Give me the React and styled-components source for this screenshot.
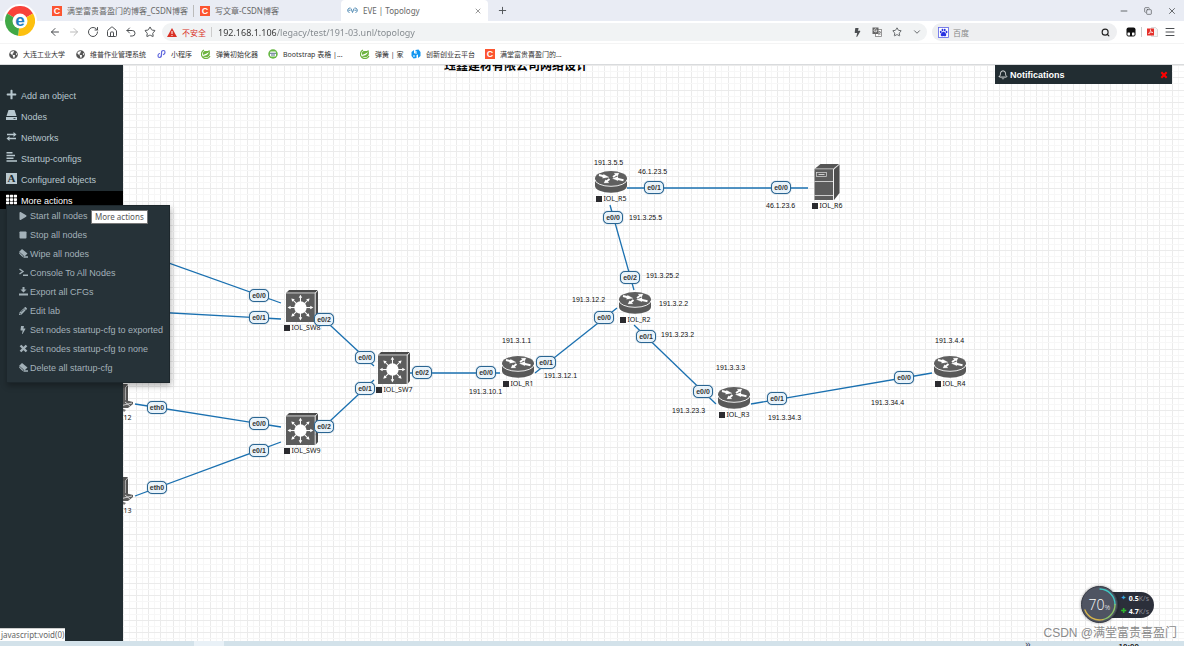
import React, { Component } from 'react';
import styled, { createGlobalStyle } from 'styled-components';
import { FaBolt, FaPlus, FaPlay, FaSquare, FaPencilAlt, FaTh, FaGlobeAmericas } from 'react-icons/fa';
import { ArrowLeft, ArrowRight, RotateCw, Home, Undo2, Star, ChevronDown, Search, Menu, Bell, X, Plus, Minus, Copy } from 'lucide-react';

const GlobalStyle = createGlobalStyle`
    * {
        box-sizing: border-box;
    }
    body {
        margin: 0;
        background: #fff;
        font-family: "Liberation Sans", "Noto Sans CJK SC", sans-serif;
    }
    button, input {
        margin: 0;
        padding: 0;
        border: 0;
        background: none;
        font: inherit;
        color: inherit;
    }
    a {
        color: inherit;
        text-decoration: none;
    }
    ul {
        margin: 0;
        padding: 0;
        list-style: none;
    }
    svg {
        display: block;
        flex: none;
    }
`

/* ---------- icons ---------- */

const BrowserLogo = () => (
    <svg width="30" height="30" viewBox="0 0 30 30">
        <path d="M15 15 L2 7.500 A15 15 0 0 1 28 7.500 Z" fill="#f8423a" />
        <path d="M15 15 L28 7.500 A15 15 0 0 1 13 29.800 Z" fill="#fdc00f" />
        <path d="M15 15 L13 29.800 A15 15 0 0 1 2 7.500 Z" fill="#41a846" />
        <circle cx="15" cy="15" r="7.500" fill="#fff" />
        <text x="15" y="19.500" textAnchor="middle" fontFamily="Liberation Sans" fontWeight="bold" fontSize="17" fill="#1f7fc0">e</text>
    </svg>
)

const EveLogo = () => (
    <svg width="11" height="7" viewBox="0 0 22 14" fill="none" stroke="#4a86b0" strokeWidth="1.900">
        <path d="M7 2 C0 1 0 11 5 11 M3 6.500 h4 M8 3 L11 11 L14 3 M15 2 C22 1 22 11 17 11 M15 6.500 h4" />
    </svg>
)

const SpringIcon = () => (
    <svg width="10" height="10" viewBox="0 0 20 20">
        <path d="M17 2 C19 9 18 14 13 16 C9 17 5 16 3 14 C8 14 14 12 16 6 C12 10 8 9 5 12 C2 8 5 4 9 4 C13 4 15 4 17 2z" fill="#6db33f" />
        <path d="M6 2 A9 9 0 1 0 18 14" fill="none" stroke="#6db33f" strokeWidth="2.500" />
    </svg>
)

const TableSiteIcon = () => (
    <svg width="10" height="10" viewBox="0 0 20 20">
        <circle cx="10" cy="10" r="9.500" fill="#67b845" />
        <rect x="4" y="5" width="12" height="10" rx="2" fill="#fff" />
        <path d="M4 8.500 h12 M6 12 h8" stroke="#526f85" strokeWidth="2" />
    </svg>
)

const MiniAppIcon = () => (
    <svg width="9" height="10" viewBox="0 0 18 20" fill="none" stroke="#5f66dd" strokeWidth="2.400" strokeLinecap="round">
        <path d="M5 9 C1 10 1 17 5 17 C9 17 9 14 9 10 C9 5 9 3 13 3 C17 3 17 9 13 11" />
    </svg>
)

const PlatformIcon = () => (
    <svg width="10" height="10" viewBox="0 0 20 20" fill="#1296f0">
        <path d="M1 6 L6 2 V9 L9 8 V2 L15 1 L19 6 V14 L14 18 V11 L11 12 V18 L5 19 L1 14z" />
        <path d="M9 4 h2 v6 h-2z M4 13 h4 v2 h-4z" fill="#fff" />
    </svg>
)

const WarningIcon = () => (
    <svg width="10" height="9" viewBox="0 0 20 18">
        <path d="M10 0 L20 18 H0z" fill="#d93025" />
        <path d="M10 6 v6 M10 14 v2" stroke="#fff" strokeWidth="2" />
    </svg>
)

const TranslateIcon = () => (
    <svg width="10" height="10" viewBox="0 0 20 20">
        <rect x="7" y="5" width="12" height="14" fill="#fff" stroke="#777" strokeWidth="1.500" />
        <rect x="1" y="1" width="12" height="13" fill="#666" />
        <path d="M10 7 A3 3 0 1 1 9 4.500 M7 7.500 h3" fill="none" stroke="#fff" strokeWidth="1.400" />
        <path d="M12 10 h6 M15 8 v2 M17 10 C16 14 14 15 12 16 M13 12 L17 16" fill="none" stroke="#555" strokeWidth="1.200" />
    </svg>
)

const PawIcon = () => (
    <svg width="11" height="11" viewBox="0 0 22 22" fill="#2932e1">
        <rect x="1" y="1" width="20" height="20" fill="#fff" stroke="#5a62e6" strokeWidth="1.600" />
        <ellipse cx="5.500" cy="10" rx="1.800" ry="2.500" />
        <ellipse cx="9" cy="6" rx="1.800" ry="2.600" />
        <ellipse cx="13.500" cy="6" rx="1.800" ry="2.600" />
        <ellipse cx="17" cy="10" rx="1.800" ry="2.500" />
        <path d="M11 9.500 C14 9.500 18 15 16 17.500 C14 19.500 13 18 11 18 C9 18 8 19.500 6 17.500 C4 15 8 9.500 11 9.500z" />
    </svg>
)

const MonkeyIcon = () => (
    <svg width="10" height="10" viewBox="0 0 20 20">
        <rect x="1" y="1" width="18" height="18" rx="4" fill="#111" />
        <rect x="3" y="11" width="5" height="6" rx="1" fill="#fff" />
        <rect x="12" y="11" width="5" height="6" rx="1" fill="#fff" />
    </svg>
)

const PdfIcon = () => (
    <svg width="11" height="10" viewBox="0 0 22 20">
        <path d="M9 1 h8 l4 4 v14 h-12z" fill="#f4f4f4" stroke="#bbb" />
        <rect x="0" y="3" width="14" height="14" fill="#e5312b" />
        <path d="M3 14 C6 11 7.500 8 7 5 C6.500 9 9 11 12 11 C8 10.500 5 11 3 14z" fill="none" stroke="#fff" strokeWidth="1.200" />
    </svg>
)

const CrossIcon = ({ size, color }) => (
    <svg width={size} height={size} viewBox="0 0 18 18" fill="none" stroke={color || 'currentColor'} strokeWidth="4.800">
        <path d="M3 3 L15 15 M15 3 L3 15" />
    </svg>
)

const DriveIcon = () => (
    <svg width="11" height="10" viewBox="0 0 22 20" fill="currentColor">
        <path d="M5 0 h12 l4 12 H1z M0 14 h22 v6 h-22z" />
        <path d="M15 17 h4" stroke="#222d32" strokeWidth="1.600" />
    </svg>
)

const TransferIcon = () => (
    <svg width="11" height="9" viewBox="0 0 22 18" fill="currentColor">
        <path d="M2 3.500 h13 V0 l6 5 -6 5 V6.500 H2z M20 11.500 H7 V8 l-6 5 6 5 v-3.500 h13z" />
    </svg>
)

const AlignIcon = () => (
    <svg width="11" height="10" viewBox="0 0 22 20" fill="currentColor">
        <path d="M1 0 h12 v3 h-12z M1 5.500 h17 v3 h-17z M1 11 h14 v3 h-14z M1 16.500 h21 v3 h-21z" />
    </svg>
)

const EraseIcon = () => (
    <svg width="9" height="9" viewBox="0 0 18 18" fill="currentColor">
        <path d="M0 6 L6 0 L17 9 L11 15z" />
        <path d="M1 8 L8 15 M9 16 h9" stroke="currentColor" strokeWidth="2.600" fill="none" />
        <path d="M2 7.500 L9 13.500" stroke="#263238" strokeWidth="1" />
    </svg>
)

const ConsoleIcon = () => (
    <svg width="9" height="9" viewBox="0 0 18 18" fill="none" stroke="currentColor" strokeWidth="2.800">
        <path d="M1 2 L8 7 L1 12 M8 14.500 h10" />
    </svg>
)

const ExportIcon = () => (
    <svg width="9" height="9" viewBox="0 0 18 18" fill="currentColor">
        <path d="M7 0 h4 v5 h4 L9 11 L3 5 h4z M0 13 h18 v4 H0z" />
    </svg>
)

/* ---------- device drawings ---------- */

const Router = () => (
    <svg width="32" height="22" viewBox="0 0 32 22">
        <path d="M0 7.500 V15 A16 6.800 0 0 0 32 15 V7.500z" fill="#585858" />
        <ellipse cx="16" cy="7.300" rx="16" ry="7.200" fill="#5f5f5f" />
        <path d="M0 8.500 A16 6.800 0 0 0 32 8.500" fill="none" stroke="#fff" strokeWidth="0.900" />
        <g stroke="#fff" strokeWidth="1.900" fill="#fff">
            <path d="M4 4 L10 5.500 M28.500 9.300 L22 7.800 M18 6 L21.500 3.500 M14.500 8 L11.500 10.500" />
            <path d="M8.500 3.200 L14 6.300 L7.500 7.200z M23 5.500 L17.500 7.600 L23 9.800z M19 2.200 L24 1.900 L22.500 5.200z M14 11.800 L9 12 L10.500 8.800z" strokeWidth="0.200" />
        </g>
    </svg>
)

const Switch = () => (
    <svg width="32" height="32" viewBox="0 0 31 31">
        <path d="M0 3 L3 0 H31 L28 3z" fill="#4a4a4a" />
        <path d="M28.500 3.500 L31 0.500 V28 L28.500 31z" fill="#4a4a4a" />
        <rect x="0" y="3" width="28" height="28" fill="#5c5c5c" />
        <path d="M0 2.800 H28.300 V31 M28.300 2.800 L31 0" fill="none" stroke="#ddd" strokeWidth="0.800" />
        <circle cx="14" cy="17" r="6" fill="#fff" />
        {[0, 45, 90, 135, 180, 225, 270, 315].map(angle => (
            <g key={angle} transform={`rotate(${angle} 14 17)`}>
                <path d="M14 12 V7" stroke="#fff" strokeWidth="1" />
                <path d="M14 4.500 L15.700 7.500 H12.300z" fill="#fff" />
            </g>
        ))}
    </svg>
)

const Server = () => (
    <svg width="26" height="36" viewBox="0 0 25 36">
        <path d="M0 5 L6 0 H25 L19 5z" fill="#555" />
        <path d="M19.500 5.500 L25 0.500 V29 L19.500 36z" fill="#4e4e4e" />
        <rect x="0" y="5" width="18.500" height="31" fill="#5c5c5c" />
        <path d="M0 4.800 H19 V36 M19 4.800 L25 0" fill="none" stroke="#e8e8e8" strokeWidth="0.700" />
        <path d="M0 17.500 H18.500 M0 31.500 H18.500" stroke="#e8e8e8" strokeWidth="0.800" />
        <rect x="2" y="8.500" width="10" height="4" fill="none" stroke="#ddd" strokeWidth="0.700" />
        <path d="M4 10.500 h6" stroke="#ddd" strokeWidth="0.900" />
    </svg>
)

const Computer = () => (
    <svg width="32" height="28" viewBox="0 0 32 28">
        <path d="M1 4 L4 0 H27 L24 4z M24.500 4 L27 1 V19 L24.500 21z" fill="#505050" />
        <rect x="1" y="4" width="23" height="16" fill="#5c5c5c" />
        <path d="M18 21 L24 16 L32 18 V20 L27 24 L18 24z" fill="#5c5c5c" />
        <path d="M21 21.500 L31 19 M24 18 L29 22" stroke="#eee" strokeWidth="0.800" />
        <path d="M20 24 L25 26 L23 28z" fill="#777" />
    </svg>
)

const drawings = { router: Router, switch: Switch, server: Server, pc: Computer }

/* ---------- data ---------- */

const bookmarks = [
    { text: '大连工业大学', icon: <FaGlobeAmericas size={9} color="#555" />, width: 67 },
    { text: '维普作业管理系统', icon: <FaGlobeAmericas size={9} color="#555" />, width: 81 },
    { text: '小程序', icon: <MiniAppIcon />, width: 44 },
    { text: '弹簧初始化器', icon: <SpringIcon />, width: 67 },
    { text: 'Bootstrap 表格 |...', icon: <TableSiteIcon />, width: 92 },
    { text: '弹簧 | 家', icon: <SpringIcon />, width: 51 },
    { text: '创新创业云平台', icon: <PlatformIcon />, width: 74 },
    { text: '满堂富贵喜盈门的...', icon: 'C', width: 90 },
]

const menuItems = [
    { text: 'Add an object', icon: <FaPlus size={11} /> },
    { text: 'Nodes', icon: <DriveIcon /> },
    { text: 'Networks', icon: <TransferIcon /> },
    { text: 'Startup-configs', icon: <AlignIcon /> },
    { text: 'Configured objects', icon: 'A' },
]

const actions = [
    { text: 'Start all nodes', icon: <FaPlay size={8} /> },
    { text: 'Stop all nodes', icon: <FaSquare size={8} /> },
    { text: 'Wipe all nodes', icon: <EraseIcon /> },
    { text: 'Console To All Nodes', icon: <ConsoleIcon /> },
    { text: 'Export all CFGs', icon: <ExportIcon /> },
    { text: 'Edit lab', icon: <FaPencilAlt size={8} /> },
    { text: 'Set nodes startup-cfg to exported', icon: <FaBolt size={8} /> },
    { text: 'Set nodes startup-cfg to none', icon: <CrossIcon size={9} /> },
    { text: 'Delete all startup-cfg', icon: <EraseIcon /> },
]

// x is the middle of the node, y its top
const nodes = [
    { name: 'VPC12', type: 'pc', x: 117, y: 319 },
    { name: 'VPC13', type: 'pc', x: 117, y: 412 },
    { name: 'IOL_SW8', type: 'switch', x: 302, y: 225 },
    { name: 'IOL_SW9', type: 'switch', x: 302, y: 348 },
    { name: 'IOL_SW7', type: 'switch', x: 394, y: 287 },
    { name: 'IOL_R1', type: 'router', x: 518, y: 291 },
    { name: 'IOL_R5', type: 'router', x: 611, y: 106 },
    { name: 'IOL_R2', type: 'router', x: 635, y: 227 },
    { name: 'IOL_R3', type: 'router', x: 734, y: 322 },
    { name: 'IOL_R4', type: 'router', x: 950, y: 291 },
    { name: 'IOL_R6', type: 'server', x: 827, y: 99 },
]

const links = [
    [135, 186, 281, 238],
    [135, 246, 281, 254],
    [316, 247, 374, 301],
    [315, 370, 374, 315],
    [135, 339, 281, 362],
    [135, 431, 281, 377],
    [408, 308, 500, 308],
    [535, 308, 617, 243],
    [627, 123, 808, 123],
    [610, 140, 634, 225],
    [634, 260, 716, 339],
    [751, 339, 932, 308],
]

// x and y are the middle of the badge
const ports = [
    { text: 'e0/0', x: 259, y: 230 },
    { text: 'e0/1', x: 259, y: 252 },
    { text: 'e0/2', x: 324, y: 254 },
    { text: 'e0/0', x: 365, y: 292 },
    { text: 'e0/1', x: 365, y: 323 },
    { text: 'e0/2', x: 324, y: 361 },
    { text: 'e0/0', x: 259, y: 358 },
    { text: 'e0/1', x: 259, y: 385 },
    { text: 'eth0', x: 157, y: 342 },
    { text: 'eth0', x: 157, y: 422 },
    { text: 'e0/2', x: 422, y: 307 },
    { text: 'e0/0', x: 486, y: 307 },
    { text: 'e0/1', x: 546, y: 297 },
    { text: 'e0/1', x: 654, y: 122 },
    { text: 'e0/0', x: 781, y: 122 },
    { text: 'e0/0', x: 613, y: 152 },
    { text: 'e0/2', x: 630, y: 212 },
    { text: 'e0/0', x: 604, y: 252 },
    { text: 'e0/1', x: 646, y: 271 },
    { text: 'e0/0', x: 703, y: 326 },
    { text: 'e0/1', x: 777, y: 333 },
    { text: 'e0/0', x: 904, y: 312 },
]

const addresses = [
    { text: '191.3.5.5', x: 594, y: 98 },
    { text: '46.1.23.5', x: 638, y: 107 },
    { text: '46.1.23.6', x: 766, y: 141 },
    { text: '191.3.25.5', x: 629, y: 153 },
    { text: '191.3.25.2', x: 646, y: 211 },
    { text: '191.3.12.2', x: 572, y: 235 },
    { text: '191.3.2.2', x: 659, y: 239 },
    { text: '191.3.23.2', x: 661, y: 270 },
    { text: '191.3.1.1', x: 502, y: 276 },
    { text: '191.3.12.1', x: 544, y: 311 },
    { text: '191.3.10.1', x: 469, y: 327 },
    { text: '191.3.3.3', x: 716, y: 303 },
    { text: '191.3.23.3', x: 672, y: 346 },
    { text: '191.3.34.3', x: 768, y: 353 },
    { text: '191.3.4.4', x: 935, y: 276 },
    { text: '191.3.34.4', x: 871, y: 338 },
]

/* ---------- page ---------- */

class Browser extends Component {
    render() {
        return (
            <Header>
                <LogoCircle><BrowserLogo /></LogoCircle>
                <TabBar>
                    <Tab $width={148}>
                        <Letter>C</Letter>
                        <TabText>满堂富贵喜盈门的博客_CSDN博客-专业</TabText>
                    </Tab>
                    <Tab $width={147}>
                        <Letter>C</Letter>
                        <TabText>写文章-CSDN博客</TabText>
                    </Tab>
                    <Tab $width={147} $active>
                        <EveLogo />
                        <TabText>EVE | Topology</TabText>
                        <X size={8} />
                    </Tab>
                    <NewTab aria-label="New tab"><Plus size={11} /></NewTab>
                    <WindowButtons>
                        <IconButton aria-label="Minimize"><Minus size={10} /></IconButton>
                        <IconButton aria-label="Restore"><Copy size={8} /></IconButton>
                        <IconButton aria-label="Close"><X size={10} /></IconButton>
                    </WindowButtons>
                </TabBar>
                <Toolbar>
                    <NavButtons>
                        <IconButton aria-label="Back"><ArrowLeft size={12} /></IconButton>
                        <IconButton aria-label="Forward" $muted><ArrowRight size={12} /></IconButton>
                        <IconButton aria-label="Reload"><RotateCw size={12} /></IconButton>
                        <IconButton aria-label="Home"><Home size={12} /></IconButton>
                        <IconButton aria-label="Undo"><Undo2 size={12} /></IconButton>
                        <IconButton aria-label="Favourite"><Star size={12} /></IconButton>
                    </NavButtons>
                    <AddressBar>
                        <WarningIcon />
                        <Unsafe>不安全</Unsafe>
                        <Divider />
                        <AddressInput aria-label="Address" defaultValue="192.168.1.106/legacy/test/191-03.unl/topology" />
                        <AddressTools>
                            <IconButton aria-label="Speed"><FaBolt size={9} /></IconButton>
                            <IconButton aria-label="Translate"><TranslateIcon /></IconButton>
                            <IconButton aria-label="Bookmark"><Star size={10} /></IconButton>
                            <IconButton aria-label="More"><ChevronDown size={10} /></IconButton>
                        </AddressTools>
                    </AddressBar>
                    <SearchBar>
                        <PawIcon />
                        <SearchInput aria-label="Search" placeholder="百度" />
                        <IconButton aria-label="Search"><Search size={9} color="#222" strokeWidth={3} /></IconButton>
                    </SearchBar>
                    <Extensions>
                        <IconButton aria-label="Scripts"><MonkeyIcon /></IconButton>
                        <Divider />
                        <IconButton aria-label="PDF"><PdfIcon /></IconButton>
                        <IconButton aria-label="Menu"><Menu size={12} /></IconButton>
                    </Extensions>
                </Toolbar>
                <Bookmarks>
                    {bookmarks.map(item => (
                        <Bookmark key={item.text} href="#" $width={item.width}>
                            {item.icon === 'C' ? <Letter>C</Letter> : item.icon}
                            {item.text}
                        </Bookmark>
                    ))}
                </Bookmarks>
            </Header>
        );
    }
}

class Sidebar extends Component {
    render() {
        return (
            <Side>
                <MenuList>
                    {menuItems.map(item => (
                        <li key={item.text}>
                            <MenuLink href="#">
                                <MenuIcon>{item.icon === 'A' ? <FontBox>A</FontBox> : item.icon}</MenuIcon>
                                {item.text}
                            </MenuLink>
                        </li>
                    ))}
                    <OpenItem>
                        <MenuLink href="#" $active>
                            <MenuIcon><FaTh size={11} /></MenuIcon>
                            More actions
                        </MenuLink>
                        <SubMenu>
                            {actions.map(item => (
                                <li key={item.text}>
                                    <SubLink href="#">
                                        <SubIcon>{item.icon}</SubIcon>
                                        {item.text}
                                    </SubLink>
                                </li>
                            ))}
                        </SubMenu>
                        <Tooltip role="tooltip">More actions</Tooltip>
                    </OpenItem>
                </MenuList>
                <StatusBubble>javascript:void(0)</StatusBubble>
            </Side>
        );
    }
}

class Topology extends Component {
    render() {
        return (
            <Canvas>
                <Plane>
                    <Title>珏鑫建材有限公司网络设计</Title>
                    <Wires>
                        {links.map((l, i) => (
                            <line key={i} x1={l[0]} y1={l[1]} x2={l[2]} y2={l[3]} />
                        ))}
                    </Wires>
                    {nodes.map(node => {
                        const Drawing = drawings[node.type]
                        return (
                            <Node key={node.name} $x={node.x} $y={node.y}>
                                <Drawing />
                                <NodeName><StateMark />{node.name}</NodeName>
                            </Node>
                        )
                    })}
                    {ports.map((port, i) => <Port key={i} $x={port.x} $y={port.y}>{port.text}</Port>)}
                    {addresses.map(a => <Address key={a.text} $x={a.x} $y={a.y}>{a.text}</Address>)}
                </Plane>
                <Notifications>
                    <Bell size={10} />
                    <NotificationsTitle>Notifications</NotificationsTitle>
                    <IconButton aria-label="Close notifications"><CrossIcon size={8} color="#f00" /></IconButton>
                </Notifications>
                <Monitor>
                    <Speeds>
                        <Speed><Arrow $color="#39a9e0">✦</Arrow><b>0.5</b>K/s</Speed>
                        <Speed><Arrow $color="#2eb82e">✚</Arrow><b>4.7</b>K/s</Speed>
                    </Speeds>
                    <Gauge>
                        <Ring width="37" height="37" viewBox="0 0 37 37" fill="none" strokeWidth="1.400" strokeLinecap="round">
                            <path d="M19 3 A15.500 15.500 0 0 1 34 18.500" stroke="#3fc8c4" />
                            <path d="M34 18.500 A15.500 15.500 0 0 1 22 33.600" stroke="#8cc468" />
                            <path d="M22 33.600 A15.500 15.500 0 0 1 4 24" stroke="#d5b44c" />
                        </Ring>
                        <Percent>70<small>%</small></Percent>
                    </Gauge>
                </Monitor>
                <Watermark>CSDN @满堂富贵喜盈门</Watermark>
            </Canvas>
        );
    }
}

export default class App extends Component {
    render() {
        return (
            <Page>
                <GlobalStyle />
                <Browser />
                <Workspace>
                    <Sidebar />
                    <Topology />
                </Workspace>
                <Taskbar>
                    <TaskButton aria-label="Task" />
                    <Chevrons>»</Chevrons>
                    <Clock>10:00</Clock>
                </Taskbar>
            </Page>
        );
    }
}

const Page = styled.div`
    display: flex;
    flex-direction: column;
    height: 100vh;
    overflow: hidden;
`
const Header = styled.header`
    position: relative;
    flex: none;
    border-bottom: 1px solid #d9dbdd;
    font-family: "Noto Sans", "Noto Sans CJK SC", sans-serif;
    color: #555;
`
const LogoCircle = styled.div`
    position: absolute;
    top: 4px;
    left: 3px;
    display: flex;
    align-items: center;
    justify-content: center;
    width: 34px;
    height: 34px;
    border-radius: 50%;
    background: #fff;
`
const TabBar = styled.div`
    display: flex;
    align-items: stretch;
    height: 21px;
    padding-left: 46px;
    background: #e9ecf4;
`
const Tab = styled.button`
    display: flex;
    align-items: center;
    gap: 5px;
    width: ${props => props.$width}px;
    padding: 0 6px;
    font-size: 8px;
    text-align: left;
    white-space: nowrap;
    color: #666;
    background: ${props => props.$active ? '#fff' : 'none'};
    border-radius: ${props => props.$active ? '4px 4px 0 0' : '0'};
    &:first-of-type {
        background: linear-gradient(#bbb, #bbb) right center / 1px 12px no-repeat;
    }
`
const TabText = styled.span`
    flex: 1;
    overflow: hidden;
`
const Letter = styled.span`
    flex: none;
    width: 10px;
    height: 10px;
    line-height: 10px;
    font-family: "Liberation Sans", sans-serif;
    font-size: 9px;
    font-weight: bold;
    text-align: center;
    color: #fff;
    background: #fc5531;
`
const IconButton = styled.button`
    display: flex;
    align-items: center;
    justify-content: center;
    min-width: 12px;
    color: ${props => props.$muted ? '#bbb' : '#4c4f52'};
`
const NewTab = styled(IconButton)`
    margin-left: 8px;
`
const WindowButtons = styled.div`
    display: flex;
    gap: 12px;
    margin-left: auto;
    padding-right: 6px;
`
const Toolbar = styled.div`
    display: flex;
    align-items: center;
    height: 22px;
    padding: 0 8px 0 49px;
`
const NavButtons = styled.div`
    display: flex;
    gap: 7px;
    margin-right: 6px;
`
const AddressBar = styled.div`
    display: flex;
    align-items: center;
    flex: 1;
    height: 18px;
    padding: 0 4px 0 5px;
    border-radius: 9px;
    background: #f1f3f4;
`
const Unsafe = styled.span`
    margin: 0 5px;
    font-size: 8px;
    color: #d93025;
`
const Divider = styled.span`
    width: 1px;
    height: 10px;
    background: #ccc;
`
const AddressInput = styled.input`
    flex: 1;
    min-width: 0;
    margin-left: 6px;
    font-size: 9px;
    outline: none;
    color: transparent;
    caret-color: #333;
    background: linear-gradient(to right, #333 58px, #80868b 58px);
    background-clip: text;
`
const AddressTools = styled.div`
    display: flex;
    gap: 8px;
`
const SearchBar = styled.div`
    display: flex;
    align-items: center;
    gap: 4px;
    width: 185px;
    height: 18px;
    margin: 0 8px 0 5px;
    padding: 0 6px;
    border-radius: 9px;
    background: #eeeff1;
`
const SearchInput = styled.input`
    flex: 1;
    min-width: 0;
    font-size: 8px;
    outline: none;
    &::placeholder {
        color: #888;
        opacity: 1;
    }
`
const Extensions = styled.div`
    display: flex;
    align-items: center;
    gap: 4px;
    & > :last-child {
        margin-left: 2px;
    }
`
const Bookmarks = styled.nav`
    display: flex;
    align-items: center;
    height: 21px;
    padding-left: 9px;
    border-top: 1px solid #f4f4f4;
`
const Bookmark = styled.a`
    display: flex;
    align-items: center;
    gap: 5px;
    width: ${props => props.$width}px;
    font-size: 7px;
    white-space: nowrap;
    color: #333;
`
const Workspace = styled.main`
    display: flex;
    flex: 1;
    min-height: 0;
`
const Side = styled.nav`
    position: relative;
    z-index: 2;
    flex: none;
    width: 123px;
    padding-top: 21px;
    background: #222d32;
    color: #b8c7ce;
`
const MenuList = styled.ul`
    display: flex;
    flex-direction: column;
    gap: 3px;
`
const MenuLink = styled.a`
    display: flex;
    align-items: center;
    gap: 4px;
    height: 18px;
    padding: 1px 0 0 6px;
    font-size: 9px;
    color: ${props => props.$active ? '#fff' : '#b8c7ce'};
    background: ${props => props.$active ? '#000' : 'none'};
`
const MenuIcon = styled.span`
    display: flex;
    justify-content: center;
    width: 11px;
    padding-bottom: 3px;
`
const FontBox = styled.span`
    width: 11px;
    height: 11px;
    line-height: 11px;
    font-family: "Liberation Serif", serif;
    font-size: 11px;
    font-weight: bold;
    text-align: center;
    color: #222d32;
    background: #b8c7ce;
`
const OpenItem = styled.li`
    position: relative;
`
const SubMenu = styled.ul`
    position: absolute;
    top: 14px;
    left: 6px;
    width: 164px;
    padding: 0 0 5px;
    background: #263238;
    border: 1px solid #1d272c;
    box-shadow: 1px 3px 6px rgba(0, 0, 0, 0.3);
`
const SubLink = styled.a`
    display: flex;
    align-items: center;
    gap: 2px;
    height: 19px;
    padding-left: 11px;
    font-size: 9px;
    white-space: nowrap;
    color: #a3b1b8;
`
const SubIcon = styled.span`
    display: flex;
    justify-content: center;
    width: 10px;
`
const Tooltip = styled.div`
    position: absolute;
    top: 19px;
    left: 91px;
    padding: 0 3px;
    line-height: 12px;
    font-family: "Noto Sans", sans-serif;
    font-size: 8px;
    white-space: nowrap;
    color: #575757;
    background: #fff;
    border: 1px solid #767676;
`
const StatusBubble = styled.div`
    position: absolute;
    bottom: 0;
    left: 0;
    padding: 0 1px;
    line-height: 12px;
    font-family: "Noto Sans", sans-serif;
    font-size: 8px;
    color: #666;
    background: #fff;
    border-top: 1px solid #ccc;
`
const Canvas = styled.section`
    position: relative;
    flex: 1;
    overflow: hidden;
`
// the lab runs on under the side menu, so the plane starts at the window's edge
const Plane = styled.div`
    position: absolute;
    inset: 0 0 0 -123px;
    background-color: #fff;
    background-image:
        linear-gradient(#ebebeb 1px, transparent 1px 6px, #f7f7f7 6px 7px, transparent 7px 12px, #ebebeb 12px 13px, transparent 13px 18px, #f7f7f7 18px 19px, transparent 19px 25px, #ebebeb 25px 26px, transparent 26px 31px, #f7f7f7 31px 32px, transparent 32px),
        linear-gradient(to right, #ebebeb 1px, transparent 1px 6px, #f7f7f7 6px 7px, transparent 7px 12px, #ebebeb 12px 13px, transparent 13px 18px, #f7f7f7 18px 19px, transparent 19px 25px, #ebebeb 25px 26px, transparent 26px 31px, #f7f7f7 31px 32px, transparent 32px);
    background-size: 37px 37px;
`
const Title = styled.h1`
    position: absolute;
    top: -7px;
    left: 444px;
    margin: 0;
    line-height: 14px;
    font-family: "Noto Sans CJK SC", sans-serif;
    font-size: 12px;
    font-weight: bold;
    white-space: nowrap;
    color: #000;
`
const Wires = styled.svg`
    position: absolute;
    width: 100%;
    height: 100%;
    line {
        stroke: #1a70b0;
        stroke-width: 1.3;
    }
`
const Node = styled.div`
    position: absolute;
    top: ${props => props.$y}px;
    left: ${props => props.$x - 25}px;
    display: flex;
    flex-direction: column;
    align-items: center;
    width: 50px;
`
const NodeName = styled.div`
    display: flex;
    align-items: center;
    gap: 2px;
    height: 11px;
    font-family: "Noto Sans", sans-serif;
    font-size: 7px;
    color: #111;
`
const StateMark = styled.span`
    width: 6px;
    height: 6px;
    background: #2b2b2f;
`
const Port = styled.span`
    position: absolute;
    top: ${props => props.$y - 6}px;
    left: ${props => props.$x - 10}px;
    display: flex;
    align-items: center;
    justify-content: center;
    width: 20px;
    height: 13px;
    font-size: 7px;
    font-weight: bold;
    color: #333;
    background: #e9f3fa;
    border: 1px solid #2a6592;
    border-radius: 5px;
    box-shadow: 0 0 1px #2a6592;
`
const Address = styled.span`
    position: absolute;
    top: ${props => props.$y - 5}px;
    left: ${props => props.$x}px;
    line-height: 10px;
    font-size: 7px;
    color: #111;
`
const Notifications = styled.div`
    position: absolute;
    top: 0;
    right: 12px;
    display: flex;
    align-items: center;
    gap: 2px;
    width: 177px;
    height: 19px;
    padding: 0 2px 0 3px;
    color: #fff;
    background: #222d32;
`
const NotificationsTitle = styled.strong`
    flex: 1;
    padding-top: 1px;
    font-size: 9px;
`
const Monitor = styled.div`
    position: absolute;
    right: 30px;
    bottom: 18px;
    display: flex;
    flex-direction: row-reverse;
    align-items: center;
`
const Gauge = styled.div`
    position: relative;
    z-index: 1;
    display: flex;
    align-items: center;
    justify-content: center;
    width: 37px;
    height: 37px;
    margin-right: -9px;
    border-radius: 50%;
    background: #4f5462;
    border: 1px solid #363a45;
    box-shadow: 0 0 3px rgba(0, 0, 0, 0.4);
`
const Ring = styled.svg`
    position: absolute;
`
const Percent = styled.span`
    font-family: "Open Sans", sans-serif;
    font-size: 14px;
    font-weight: 300;
    color: #fff;
    small {
        font-size: 7px;
    }
`
const Speeds = styled.div`
    padding: 0 5px 0 12px;
    border-radius: 0 13px 13px 0;
    background: #2b2f3a;
`
const Speed = styled.div`
    display: flex;
    align-items: center;
    height: 13px;
    font-family: "Open Sans", sans-serif;
    font-size: 7px;
    color: #8d919b;
    b {
        color: #fff;
    }
`
const Arrow = styled.span`
    width: 8px;
    font-family: "DejaVu Sans", sans-serif;
    font-size: 7px;
    color: ${props => props.$color};
`
const Watermark = styled.div`
    position: absolute;
    right: 7px;
    bottom: 0;
    line-height: 16px;
    font-size: 12px;
    white-space: nowrap;
    color: #8b8b8b;
`
const Taskbar = styled.footer`
    display: flex;
    flex: none;
    align-items: flex-start;
    justify-content: flex-end;
    height: 5px;
    overflow: hidden;
    background: #d3e2ea;
`
const TaskButton = styled.button`
    width: 30px;
    height: 5px;
    margin: 0 auto 0 194px;
    background: #e9f1f7;
`
const Chevrons = styled.span`
    margin-right: 88px;
    line-height: 8px;
    font-size: 10px;
    color: #335;
`
const Clock = styled.span`
    margin-right: 45px;
    padding-top: 1px;
    line-height: 9px;
    font-size: 8px;
    font-weight: bold;
    color: #222;
`
